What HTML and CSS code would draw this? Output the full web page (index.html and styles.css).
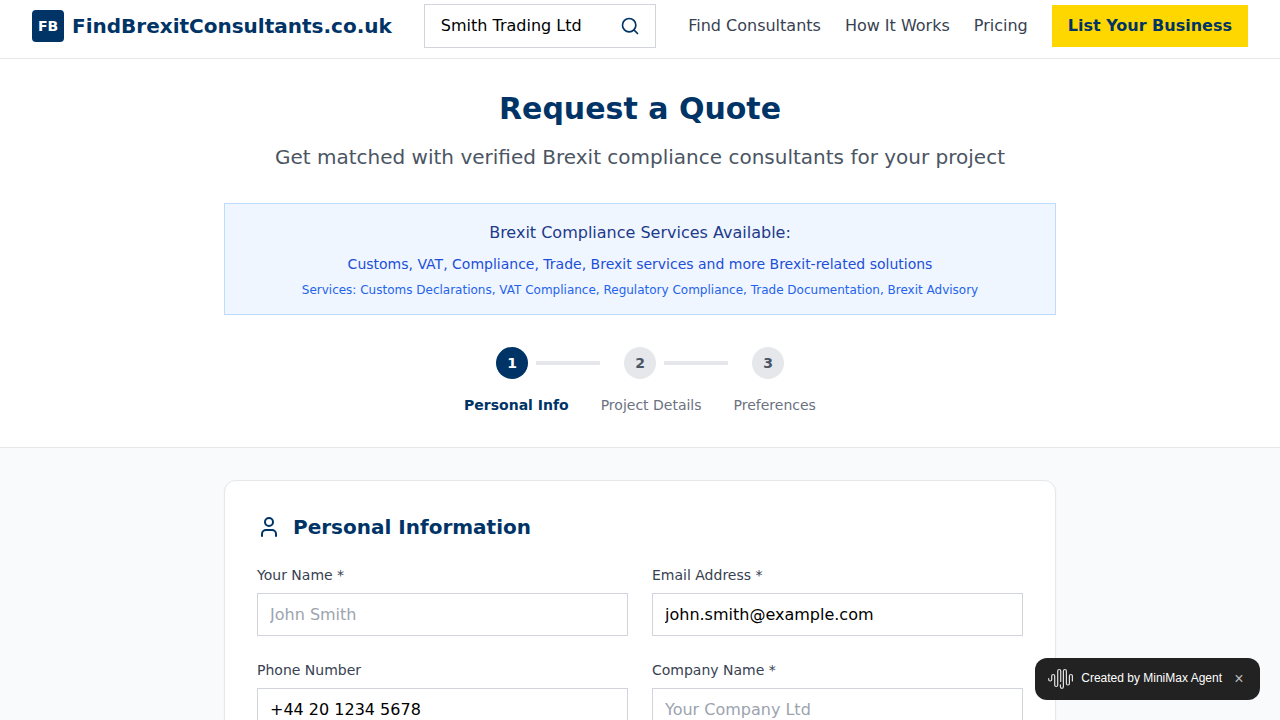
FILE: index.html
```html
<!DOCTYPE html>
<html lang="en">
<head>
<meta charset="utf-8">
<meta name="viewport" content="width=device-width, initial-scale=1">
<title>Request a Quote - FindBrexitConsultants.co.uk</title>
<link rel="stylesheet" href="styles.css">
</head>
<body>
<header class="site-header">
  <a class="brand" href="#">
    <span class="brand-mark">FB</span>
    <span class="brand-name">FindBrexitConsultants.co.uk</span>
  </a>
  <form class="search" role="search">
    <input class="search-input" type="text" aria-label="Search consultants" value="Smith Trading Ltd">
    <button class="search-button" type="button" aria-label="Search">
      <svg width="20" height="20" viewBox="0 0 24 24" fill="none" stroke="currentColor" stroke-width="2" stroke-linecap="round" stroke-linejoin="round"><circle cx="11" cy="11" r="8"/><path d="m21 21-4.3-4.3"/></svg>
    </button>
  </form>
  <nav class="nav">
    <a class="nav-link" href="#">Find Consultants</a>
    <a class="nav-link" href="#">How It Works</a>
    <a class="nav-link" href="#">Pricing</a>
    <a class="nav-cta" href="#">List Your Business</a>
  </nav>
</header>

<section class="hero">
  <div class="container">
    <h1 class="hero-title">Request a Quote</h1>
    <p class="hero-lead">Get matched with verified Brexit compliance consultants for your project</p>
    <div class="services">
      <p class="services-title">Brexit Compliance Services Available:</p>
      <p class="services-text">Customs, VAT, Compliance, Trade, Brexit services and more Brexit-related solutions</p>
      <p class="services-list">Services: Customs Declarations, VAT Compliance, Regulatory Compliance, Trade Documentation, Brexit Advisory</p>
    </div>
    <div class="steps">
      <div class="step"><span class="step-number step-number-active">1</span><span class="step-line"></span></div>
      <div class="step"><span class="step-number">2</span><span class="step-line"></span></div>
      <div class="step"><span class="step-number">3</span></div>
    </div>
    <div class="step-labels">
      <span class="step-label-active">Personal Info</span>
      <span>Project Details</span>
      <span>Preferences</span>
    </div>
  </div>
</section>

<main class="main">
  <div class="container">
    <form class="card">
      <h2 class="card-title">
        <svg width="24" height="24" viewBox="0 0 24 24" fill="none" stroke="currentColor" stroke-width="2" stroke-linecap="round" stroke-linejoin="round" aria-hidden="true"><path d="M19 21v-2a4 4 0 0 0-4-4H9a4 4 0 0 0-4 4v2"/><circle cx="12" cy="7" r="4"/></svg>
        Personal Information
      </h2>
      <div class="fields">
        <div class="field">
          <label class="label" for="name">Your Name *</label>
          <input class="input" id="name" type="text" placeholder="John Smith">
        </div>
        <div class="field">
          <label class="label" for="email">Email Address *</label>
          <input class="input" id="email" type="email" value="john.smith@example.com">
        </div>
        <div class="field">
          <label class="label" for="phone">Phone Number</label>
          <input class="input" id="phone" type="tel" value="+44 20 1234 5678">
        </div>
        <div class="field">
          <label class="label" for="company">Company Name *</label>
          <input class="input" id="company" type="text" placeholder="Your Company Ltd">
        </div>
      </div>
    </form>
  </div>
</main>

<div class="badge">
  <svg class="badge-logo" width="26" height="22" viewBox="0 0 26 22" fill="none" stroke="currentColor" stroke-width="1.2" stroke-linecap="round" aria-hidden="true"><path d="M1.7 10.5v1a1.5 1.5 0 0 0 3 0V8a1.5 1.5 0 0 1 3 0v9a1.5 1.5 0 0 0 3 0V3a1.500 1.500 0 0 1 3 0v10.500"/><path d="M13.400 16.800v2a1.500 1.500 0 0 0 3 0V3a1.500 1.500 0 0 1 3 0v12.500a1.500 1.500 0 0 0 3 0V8a1.500 1.500 0 0 1 3 0v5"/></svg>
  <span class="badge-text">Created by MiniMax Agent</span>
  <button class="badge-close" type="button" aria-label="Close">×</button>
</div>
</body>
</html>
```
FILE: styles.css
```css
*, *::before, *::after { box-sizing: border-box; }
body {
  margin: 0;
  background: #f9fafb;
  color: #000;
  font-family: "DejaVu Sans", sans-serif;
  font-size: 16px;
  line-height: 24px;
}
h1, h2, p { margin: 0; }
a { text-decoration: none; color: inherit; }
input, button { font: inherit; color: inherit; }
svg { display: block; flex-shrink: 0; }

.site-header {
  display: flex;
  align-items: center;
  gap: 32px;
  padding: 4px 32px 10px;
  background: #fff;
  border-bottom: 1px solid #e5e7eb;
}
.brand { display: flex; align-items: center; gap: 8px; color: #003366; font-weight: 700; }
.brand-mark {
  display: flex;
  align-items: center;
  justify-content: center;
  width: 32px;
  height: 32px;
  border-radius: 4px;
  background: #003366;
  color: #fff;
  font-size: 14px;
}
.brand-name { font-size: 20px; }
.search {
  display: flex;
  flex: 1;
  align-items: center;
  min-width: 0;
  padding-right: 15px;
  border: 1px solid #d1d5db;
  background: #fff;
}
.search-input {
  flex: 1;
  min-width: 0;
  height: 42px;
  padding: 0 16px 2px;
  border: 0;
  background: transparent;
}
.search-button { padding: 0; border: 0; background: none; color: #003366; }
.nav { display: flex; align-items: center; gap: 24px; white-space: nowrap; }
.nav-link { color: #374151; }
.nav-cta { padding: 9px 16px; background: #ffd700; color: #003366; font-weight: 700; }

.container { max-width: 896px; margin: 0 auto; padding: 0 32px; }
.hero { padding: 32px 0; background: #fff; border-bottom: 1px solid #e5e7eb; text-align: center; }
.hero-title { margin-bottom: 16px; color: #003366; font-size: 30px; line-height: 36px; }
.hero-lead { margin-bottom: 32px; color: #4b5563; font-size: 20px; line-height: 28px; }
.services {
  display: flex;
  flex-direction: column;
  gap: 6px;
  margin-bottom: 32px;
  padding: 16px;
  border: 1px solid #bfdbfe;
  background: #eff6ff;
}
.services-title { color: #1e3a8a; line-height: 26px; }
.services-text { color: #1d4ed8; font-size: 14px; }
.services-list { color: #2563eb; font-size: 12px; line-height: 16px; }
.steps { display: flex; justify-content: center; gap: 24px; margin-bottom: 16px; }
.step { display: flex; align-items: center; gap: 8px; }
.step-number {
  display: flex;
  align-items: center;
  justify-content: center;
  width: 32px;
  height: 32px;
  border-radius: 50%;
  background: #e5e7eb;
  color: #4b5563;
  font-size: 14px;
  font-weight: 700;
}
.step-number-active { background: #003366; color: #fff; }
.step-line { width: 64px; height: 4px; background: #e5e7eb; }
.step-labels { display: flex; justify-content: center; gap: 32px; color: #6b7280; font-size: 14px; line-height: 20px; }
.step-label-active { color: #003366; font-weight: 700; }

.main { padding: 32px 0; }
.card {
  padding: 32px;
  border: 1px solid #e5e7eb;
  border-radius: 12px;
  background: #fff;
  box-shadow: 0 1px 2px rgba(0, 0, 0, 0.05);
}
.card-title {
  display: flex;
  align-items: center;
  gap: 12px;
  margin-bottom: 24px;
  color: #003366;
  font-size: 20px;
  line-height: 28px;
}
.fields { display: grid; grid-template-columns: 1fr 1fr; gap: 24px; }
.field { display: flex; flex-direction: column; gap: 8px; }
.label { color: #374151; font-size: 14px; line-height: 20px; }
.input { width: 100%; height: 43px; padding: 0 12px; border: 1px solid #d1d5db; background: #fff; }
.input::placeholder { color: #9ca3af; }

.badge {
  position: fixed;
  right: 20px;
  bottom: 20px;
  display: flex;
  align-items: center;
  height: 42px;
  padding: 0 16px 0 12px;
  border-radius: 12px;
  background: #222;
  color: #fff;
  font-family: "Liberation Sans", Arial, sans-serif;
  font-size: 12px;
  line-height: 16px;
  white-space: nowrap;
}
.badge-logo { margin-right: 8px; color: #e0e0e0; }
.badge-text { padding-bottom: 2px; }
.badge-close { width: 10px; margin-left: 12px; padding: 0; border: 0; background: none; color: #bbb; font-size: 16px; }
```
